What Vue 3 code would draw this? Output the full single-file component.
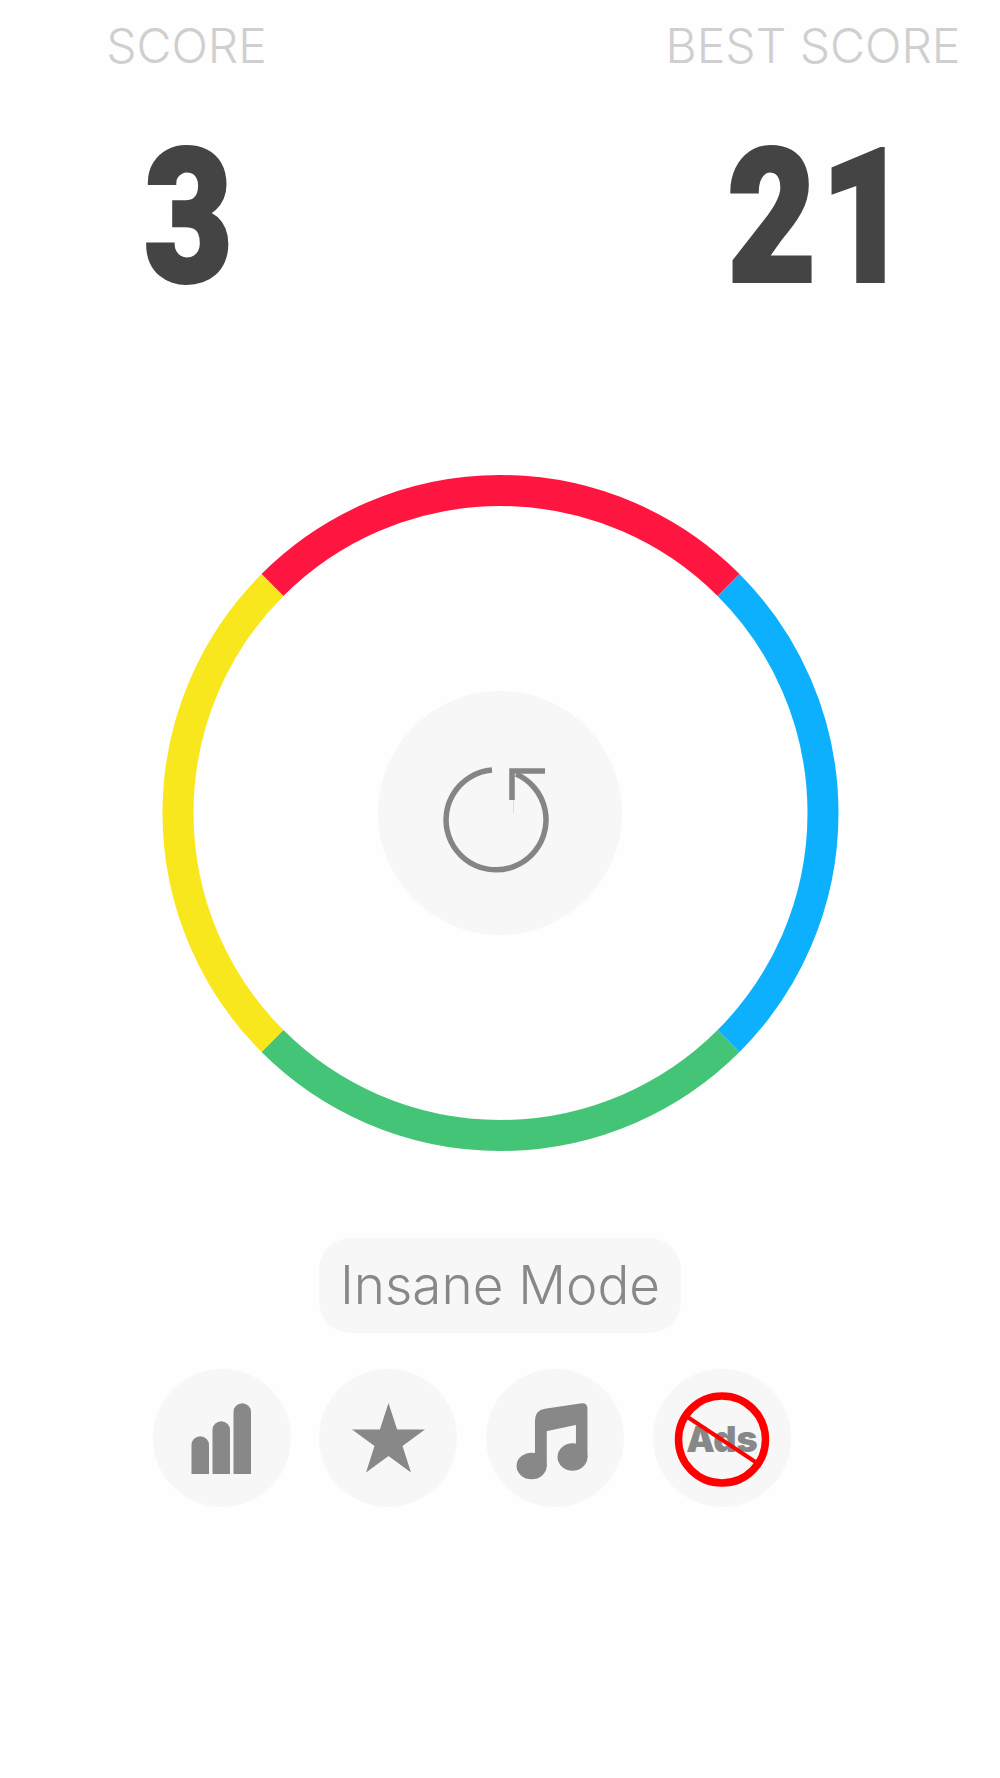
<template>
  <div class="game">
    <header class="scores">
      <div class="score-col left">
        <div class="label">SCORE</div>
        <div class="num">{{ score }}</div>
      </div>
      <div class="score-col right">
        <div class="label">BEST SCORE</div>
        <div class="num">{{ best }}</div>
      </div>
    </header>

    <div class="wheel">
      <svg class="ring" viewBox="0 0 680 680" width="680" height="680">
        <path
          v-for="arc in arcs"
          :key="arc.color"
          :d="arc.d"
          :stroke="arc.color"
          stroke-width="31"
          fill="none"
        />
      </svg>
      <div class="replay">
        <svg viewBox="0 0 244 244" width="244" height="244">
          <path d="M114 79 A50 50 0 1 0 138 83" fill="none" stroke="#858585" stroke-width="5.500" />
          <path d="M167 80 H134 V109" fill="none" stroke="#858585" stroke-width="5.500" />
          <path d="M135.500 109 V122" fill="none" stroke="#ddd" stroke-width="1" />
        </svg>
      </div>
    </div>

    <div class="mode">Insane Mode</div>

    <div class="actions">
      <div class="action">
        <svg viewBox="0 0 138 138" width="138" height="138">
          <path d="M38.500 105 V76 a8.750 8.750 0 0 1 17.500 0 V105 Z" fill="#888" />
          <path d="M59.500 105 V61 a8.750 8.750 0 0 1 17.500 0 V105 Z" fill="#888" />
          <path d="M80.500 105 V43 a8.750 8.750 0 0 1 17.500 0 V105 Z" fill="#888" />
        </svg>
      </div>
      <div class="action">
        <svg viewBox="0 0 138 138" width="138" height="138">
          <path d="M69.500 34 L78.100 60.500 L106 60.500 L83.500 77 L92 103.500 L69.500 87 L47 103.500 L55.500 77 L33 60.500 L60.900 60.500 Z" fill="#888" />
        </svg>
      </div>
      <div class="action">
        <svg viewBox="0 0 138 138" width="138" height="138">
          <g fill="#888" stroke="#888" stroke-width="1.500" stroke-linejoin="round">
            <path d="M49.700 97 V52 Q49.700 42 59 40.500 L96 35 Q100.700 34.500 100.700 40 V88 H90.700 V55 L60 61.500 V97 Z" />
            <ellipse cx="45.600" cy="97" rx="14.300" ry="12.500" />
            <ellipse cx="86.500" cy="88" rx="14.200" ry="13" />
          </g>
        </svg>
      </div>
      <div class="action">
        <svg viewBox="0 0 138 138" width="138" height="138">
          <text x="69" y="83" text-anchor="middle" class="ads">Ads</text>
          <circle cx="69" cy="70.500" r="43.500" fill="none" stroke="#f00" stroke-width="7.500" />
          <path d="M33 47 L104 94" stroke="#f00" stroke-width="4" />
        </svg>
      </div>
    </div>
  </div>
</template>

<script setup>
const score = 3
const best = 21

// ring is cut in four quarters, with the seams on the diagonals
const cx = 340.5
const cy = 340
const r = 322.5

function point(deg) {
  const a = (deg * Math.PI) / 180
  return `${(cx + r * Math.cos(a)).toFixed(2)} ${(cy + r * Math.sin(a)).toFixed(2)}`
}

const arcs = [
  { color: '#ff1640', from: -135, to: -45 },
  { color: '#0db0fd', from: -45, to: 45 },
  { color: '#44c476', from: 45, to: 135 },
  { color: '#f8e71c', from: 135, to: 225 },
].map((s) => ({
  color: s.color,
  d: `M${point(s.from)} A${r} ${r} 0 0 1 ${point(s.to)}`,
}))
</script>

<style>
body {
  background: #fff;
}
</style>

<style scoped>
.game {
  width: 1000px;
  height: 1778px;
  overflow: hidden;
  background: #fefefe;
  font-family: Inter, Roboto, 'Liberation Sans', sans-serif;
}
.scores {
  display: flex;
  height: 473px;
}
.score-col {
  display: flex;
  flex-direction: column;
  align-items: center;
  width: 300px;
  padding-top: 18px;
}
.score-col.left {
  margin-left: 36.5px;
}
.score-col.right {
  margin-left: auto;
  margin-right: 37px;
}
.label {
  font-size: 48px;
  line-height: 56px;
  font-weight: 300;
  color: #cfcfcf;
  white-space: nowrap;
}
.num {
  position: relative;
  margin-top: 58px;
  font-family: Roboto, 'Liberation Sans', sans-serif;
  font-size: 186px;
  line-height: 170px;
  font-weight: 900;
  letter-spacing: 6px;
  color: #444;
  -webkit-text-stroke: 4px #444;
  transform: scaleX(0.82);
}
.score-col.left .num {
  left: 4px;
}
.score-col.right .num {
  left: 7.5px;
}
.wheel {
  display: grid;
  width: 680px;
  height: 680px;
  margin: 0 auto;
  place-items: center;
}
.ring,
.replay {
  grid-area: 1 / 1;
}
.replay {
  width: 244px;
  height: 244px;
  border-radius: 50%;
  background: #f7f7f7;
}
.replay svg,
.action svg {
  display: block;
}
.mode {
  width: 362px;
  height: 95px;
  margin: 85px auto 0;
  border-radius: 32px;
  background: #f7f7f7;
  color: #888;
  font-size: 53px;
  font-weight: 300;
  line-height: 95px;
  text-align: center;
}
.actions {
  display: flex;
  gap: 28.7px;
  margin: 36px 0 0 152.5px;
}
.action {
  width: 138px;
  height: 138px;
  border-radius: 50%;
  background: #f7f7f7;
}
.ads {
  font-family: Inter, 'Liberation Sans', sans-serif;
  font-size: 36px;
  font-weight: 900;
  fill: #888;
}
</style>
